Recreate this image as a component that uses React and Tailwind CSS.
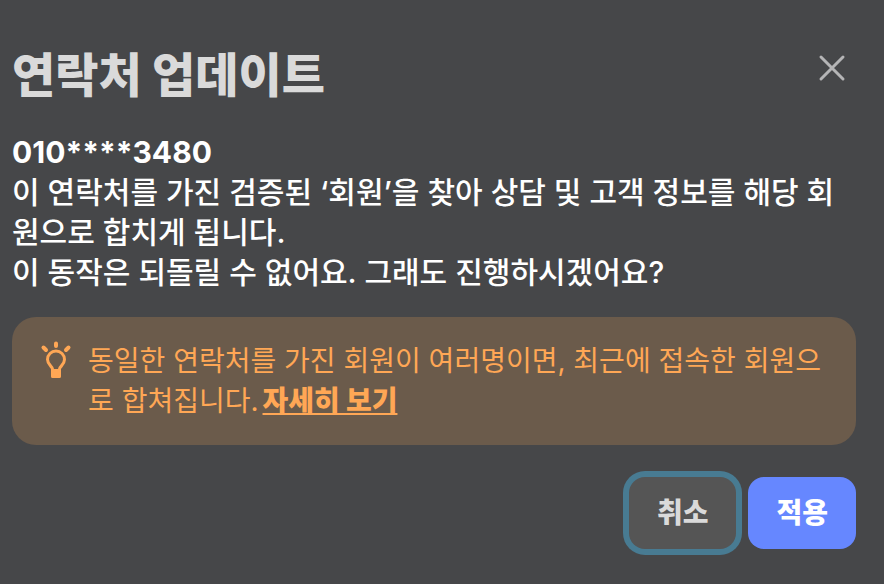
import React from 'react'

function CloseIcon() {
  return (
    <svg viewBox="0 0 28 28" className="w-7 h-7" fill="none" stroke="currentColor" strokeWidth="3" strokeLinecap="round" aria-hidden="true">
      <path d="M3 3l22 22M25 3L3 25" />
    </svg>
  )
}

function BulbIcon() {
  return (
    <svg viewBox="0 0 40 40" className="w-10 h-10 shrink-0" fill="none" stroke="currentColor" strokeWidth="3" aria-hidden="true">
      <path d="M20 2.500v2.500M7.500 6.500l2.500 2.500M32.500 6.500l-2.500 2.500" strokeLinecap="round" strokeWidth="4" />
      <path d="M16.500 31v-3c0-2.500-5-4-5-9.500a8.500 8.500 0 0 1 17 0c0 5.500-5 7-5 9.500v3" />
      <path d="M15 28h10v7.500a1.500 1.500 0 0 1-1.500 1.500h-7a1.500 1.500 0 0 1-1.500-1.500z" fill="currentColor" stroke="none" />
    </svg>
  )
}

export default function App() {
  return (
    <div
      role="dialog"
      aria-labelledby="dialog-title"
      className="min-h-screen bg-[#464749] pl-3 pr-7 pt-10 pb-8 font-['Inter','Noto_Sans_CJK_KR',sans-serif] break-all"
    >
      <header className="flex items-start justify-between">
        <h1 id="dialog-title" className="text-[47px] leading-[70px] font-extrabold text-[#dadada]">연락처 업데이트</h1>
        <button type="button" aria-label="닫기" className="px-[10px] py-[14px] text-[#b5b5b6]">
          <CloseIcon />
        </button>
      </header>

      <div className="mt-[22px] text-[30px] leading-10 font-medium text-white">
        <p className="font-bold">010****3480</p>
        <p>이 연락처를 가진 검증된 ‘회원’을 찾아 상담 및 고객 정보를 해당 회원으로 합치게 됩니다.</p>
        <p>이 동작은 되돌릴 수 없어요. 그래도 진행하시겠어요?</p>
      </div>

      <div className="mt-[25px] flex gap-3 rounded-3xl bg-[#6b5b4b] px-6 py-6 text-[28px] leading-10 text-[#ffa755]">
        <BulbIcon />
        <p>
          동일한 연락처를 가진 회원이 여러명이면, 최근에 접속한 회원으로 합쳐집니다.
          <a href="#details" className="ml-1 font-extrabold underline">자세히 보기</a>
        </p>
      </div>

      <footer className="mt-8 flex justify-end gap-3 text-[28px] leading-10 font-extrabold">
        <button type="button" className="rounded-2xl bg-[#555] px-7 py-4 text-[#dadada] ring-6 ring-[#487b92]">취소</button>
        <button type="button" className="rounded-2xl bg-[#6687ff] px-7 py-4 text-white">적용</button>
      </footer>
    </div>
  )
}
